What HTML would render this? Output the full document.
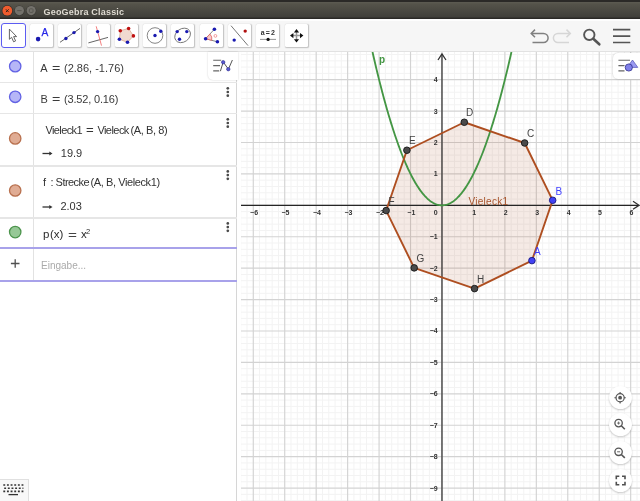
<!DOCTYPE html>
<html><head><meta charset="utf-8">
<style>
html,body{margin:0;padding:0;width:640px;height:501px;overflow:hidden;background:#fff;font-family:"Liberation Sans",sans-serif;}
body{filter:blur(0.35px);}
.abs{position:absolute;}
#title{left:0;top:0;width:640px;height:19px;background:linear-gradient(#2b2927 0,#2b2927 1.5px,#5b5950 2.5px,#55534a 4px,#403f3a 17px,#2a2926 18px,#2a2926 19px);}
#title .t{left:43.5px;top:6.5px;font-size:9px;font-weight:bold;color:#dfdbd2;letter-spacing:0.2px;}
#toolbar{left:0;top:19px;width:640px;height:33px;background:linear-gradient(#fdfdfd 0,#fdfdfd 1.5px,#f6f6f6 2.5px);border-bottom:1.2px solid #e2e2e2;box-sizing:border-box;}
.btn{position:absolute;top:5px;width:23px;height:23px;border-radius:1.5px;background:#fff;box-shadow:0.2px 0.4px 1.2px rgba(0,0,0,0.22);}
.btn.sel{box-shadow:none;border:1.7px solid #5c5cf2;border-radius:3px;box-sizing:border-box;width:24.6px;height:24.6px;top:4.1px;}
#alg{left:0;top:52px;width:236px;height:449px;background:#fff;border-right:1px solid #d6d6d6;}
.hl{position:absolute;left:0;width:237px;height:1.5px;background:#e6e6e6;}
.mk{position:absolute;left:8.8px;width:11px;height:11px;border-radius:50%;}
.tx{position:absolute;font-size:10.3px;color:#333;white-space:nowrap;}
.dots{position:absolute;left:226.5px;width:2px;}
.dots i{display:block;width:1.8px;height:1.8px;border-radius:50%;background:#666;margin-bottom:1.5px;}
#graph{left:241px;top:52px;width:399px;height:449px;overflow:hidden;}
.zb{position:absolute;width:23px;height:23px;border-radius:50%;background:#fff;box-shadow:0 1px 2px rgba(0,0,0,0.22);}
</style></head><body>
<div id="title" class="abs">
  <svg class="abs" style="left:0;top:0" width="44" height="19">
    <circle cx="7.3" cy="10.7" r="5.6" fill="#33302c"/>
    <circle cx="7.3" cy="10.7" r="4.9" fill="#f05c2e"/>
    <path d="M5.9 9.3L8.7 12.1M8.7 9.3L5.9 12.1" stroke="#3a2218" stroke-width="1"/>
    <circle cx="19.4" cy="10.6" r="5.2" fill="#3b3a36"/>
    <circle cx="19.4" cy="10.6" r="4.6" fill="#73716b"/>
    <path d="M17.2 10.6H21.6" stroke="#55534e" stroke-width="0.9"/>
    <circle cx="31.2" cy="10.6" r="5.2" fill="#3b3a36"/>
    <circle cx="31.2" cy="10.6" r="4.6" fill="#73716b"/>
    <rect x="29.4" y="8.8" width="3.6" height="3.6" rx="0.8" fill="none" stroke="#55534e" stroke-width="0.9"/>
  </svg>
  <div class="abs t">GeoGebra Classic</div>
</div>
<div id="toolbar" class="abs">
  <div class="btn sel" style="left:1.2px"></div>
  <div class="btn" style="left:30px"></div>
  <div class="btn" style="left:58px"></div>
  <div class="btn" style="left:86.5px"></div>
  <div class="btn" style="left:114.6px"></div>
  <div class="btn" style="left:143px"></div>
  <div class="btn" style="left:171px"></div>
  <div class="btn" style="left:199.8px"></div>
  <div class="btn" style="left:227.8px"></div>
  <div class="btn" style="left:256px"></div>
  <div class="btn" style="left:284.8px"></div>
  <svg class="abs" style="left:0;top:-19px" width="640" height="52">
    <!-- select -->
    <path d="M9.4 29.1V39.3L11.6 37.3L13.6 41.8L15.6 40.9L13.6 36.6H16.6Z" fill="#fff" stroke="#555" stroke-width="0.9" stroke-linejoin="round"/>
    <!-- point -->
    <circle cx="38.1" cy="39.1" r="2.3" fill="#1a1ab0"/>
    <text x="41.4" y="35.7" font-family="Liberation Sans" font-size="10.2" fill="#2525e8" stroke="#2525e8" stroke-width="0.25">A</text>
    <!-- line -->
    <path d="M60 42.3L80 28.4" stroke="#555" stroke-width="0.9"/>
    <circle cx="65.9" cy="38.5" r="1.7" fill="#1a1ab0"/>
    <circle cx="74" cy="32.6" r="1.7" fill="#1a1ab0"/>
    <!-- perpendicular -->
    <path d="M88.4 42.9L108 37.4" stroke="#666" stroke-width="1"/>
    <path d="M96.2 26.3L101.5 45.6" stroke="#f07070" stroke-width="0.9"/>
    <circle cx="97.6" cy="31.6" r="1.7" fill="#1a1ab0"/>
    <!-- polygon -->
    <polygon points="120.3,30.7 128.6,28.5 133.4,35.9 127.5,42.3 119.4,39.2" fill="#f0d9d0" stroke="#d8a890" stroke-width="0.8"/>
    <circle cx="120.3" cy="30.7" r="1.8" fill="#c01010"/>
    <circle cx="128.6" cy="28.5" r="1.8" fill="#c01010"/>
    <circle cx="133.4" cy="35.9" r="1.8" fill="#c01010"/>
    <circle cx="127.5" cy="42.3" r="1.8" fill="#1a1ab0"/>
    <circle cx="119.4" cy="39.2" r="1.8" fill="#1a1ab0"/>
    <!-- circle -->
    <circle cx="155" cy="35.5" r="7.8" fill="none" stroke="#777" stroke-width="0.9"/>
    <circle cx="155" cy="35.5" r="1.7" fill="#1a1ab0"/>
    <circle cx="160.8" cy="31.3" r="1.7" fill="#1a1ab0"/>
    <!-- conic -->
    <ellipse cx="182.6" cy="35.4" rx="8.4" ry="6.6" transform="rotate(-35 182.6 35.4)" fill="none" stroke="#777" stroke-width="0.9"/>
    <circle cx="177.2" cy="31.6" r="1.7" fill="#1a1ab0"/>
    <circle cx="186.8" cy="31.6" r="1.7" fill="#1a1ab0"/>
    <circle cx="179.5" cy="39.2" r="1.7" fill="#1a1ab0"/>
    <!-- angle -->
    <path d="M205.6 38.7L214.4 29.2M205.6 38.7L217.4 41.8" stroke="#666" stroke-width="0.8"/>
    <path d="M205.6 38.7L209.9 34.1A6.3 6.3 0 0 1 211.7 40.3Z" fill="#f8c8c8" stroke="#e06060" stroke-width="0.8"/>
    <circle cx="215.4" cy="35.9" r="1.4" fill="none" stroke="#f09090" stroke-width="0.9"/>
    <circle cx="205.6" cy="38.7" r="1.8" fill="#1a1ab0"/>
    <circle cx="214.4" cy="29.2" r="1.8" fill="#1a1ab0"/>
    <circle cx="217.4" cy="41.8" r="1.8" fill="#1a1ab0"/>
    <!-- reflect -->
    <path d="M231 25.7L248 45.6" stroke="#666" stroke-width="0.9"/>
    <circle cx="245.2" cy="31.1" r="1.7" fill="#b01010"/>
    <circle cx="234.2" cy="40.1" r="1.7" fill="#1a1ab0"/>
    <!-- slider -->
    <text x="260.8" y="35" font-family="Liberation Sans" font-size="7" font-weight="bold" fill="#333" textLength="14.2">a = 2</text>
    <path d="M260 39.4H276" stroke="#888" stroke-width="0.9"/>
    <circle cx="268.1" cy="39.4" r="1.6" fill="#111"/>
    <!-- move graphics -->
    <path d="M292 35.6H301M296.5 31V40.2" stroke="#999" stroke-width="1.5"/>
    <path d="M296.5 29L293.9 32.4H299.1ZM296.5 42.6L293.9 39.2H299.1ZM290 35.6L293.4 33V38.2ZM303.4 35.6L300 33V38.2Z" fill="#111"/>
    <!-- undo -->
    <path d="M532 33.4H543.5A4.6 4.6 0 0 1 543.5 42.6H532.5" fill="none" stroke="#808080" stroke-width="1.5"/>
    <path d="M535 29.6L531.2 33.4L535 37.2" fill="none" stroke="#808080" stroke-width="1.5"/>
    <!-- redo -->
    <path d="M569.5 33.4H558A4.6 4.6 0 0 0 558 42.6H569" fill="none" stroke="#d6d6d6" stroke-width="1.5"/>
    <path d="M566.5 29.6L570.3 33.4L566.5 37.2" fill="none" stroke="#d6d6d6" stroke-width="1.5"/>
    <!-- search -->
    <circle cx="589.3" cy="34.8" r="5.2" fill="none" stroke="#555" stroke-width="1.9"/>
    <path d="M593.3 38.8L599.3 44.3" stroke="#555" stroke-width="2.6" stroke-linecap="round"/>
    <!-- menu -->
    <path d="M613 29.6H630.3M613 36.1H630.3M613 42.5H630.3" stroke="#555" stroke-width="1.6"/>
  </svg>
</div>

<div id="alg" class="abs">
  <div class="abs" style="left:32.5px;top:0;width:1px;height:228px;background:#e2e2e2"></div>
  <div class="hl" style="top:29.8px"></div>
  <div class="hl" style="top:60.6px"></div>
  <div class="hl" style="top:113.3px"></div>
  <div class="hl" style="top:165.3px"></div>
  <div class="abs" style="left:0;top:195px;width:237px;height:2px;background:#a8a2ea"></div>
  <div class="abs" style="left:0;top:227.5px;width:237px;height:2px;background:#a8a2ea"></div>
  <svg class="abs" style="left:0;top:0" width="32" height="200"><circle cx="15.2" cy="14.2" r="5.7" fill="#b6b6f7" stroke="#6262e4" stroke-width="1.3"/><circle cx="15.2" cy="44.8" r="5.7" fill="#b6b6f7" stroke="#6262e4" stroke-width="1.3"/><circle cx="15.2" cy="86.4" r="5.7" fill="#e0ac94" stroke="#b8704e" stroke-width="1.3"/><circle cx="15.2" cy="138.5" r="5.7" fill="#e0ac94" stroke="#b8704e" stroke-width="1.3"/><circle cx="15.2" cy="180.1" r="5.7" fill="#96c896" stroke="#4c944c" stroke-width="1.3"/></svg>

  <div class="tx" style="left:40.3px;top:10px;font-size:11px;color:#3a3a3a">A</div>
  <div class="tx" style="left:52.1px;top:10px;font-size:11px;color:#3a3a3a;transform:scaleX(1.3);transform-origin:0 0">=</div>
  <div class="tx" style="left:64px;top:10px;font-size:11px;color:#3a3a3a">(2.86, -1.76)</div>
  <div class="tx" style="left:40.5px;top:40.8px;font-size:11px;color:#3a3a3a">B</div>
  <div class="tx" style="left:51.8px;top:40.8px;font-size:11px;color:#3a3a3a;transform:scaleX(1.3);transform-origin:0 0">=</div>
  <div class="tx" style="left:64px;top:40.8px;font-size:11px;color:#3a3a3a;letter-spacing:-0.17px">(3.52, 0.16)</div>
  <div class="tx" style="left:45.4px;top:72.4px;font-size:11px;letter-spacing:-0.6px">Vieleck1</div>
  <div class="tx" style="left:85.7px;top:72.4px;font-size:11px;transform:scaleX(1.2);transform-origin:0 0">=</div>
  <div class="tx" style="left:97.4px;top:72.4px;font-size:11px;letter-spacing:-0.55px">Vieleck</div>
  <div class="tx" style="left:130.5px;top:72.4px;font-size:11px;letter-spacing:-0.4px">(A, B, 8)</div>
  <div class="tx" style="left:60.8px;top:95px;font-size:11px">19.9</div>
  <div class="tx" style="left:43.1px;top:124.4px;font-size:11px">f</div>
  <div class="tx" style="left:50.6px;top:124.4px;font-size:11px">:</div>
  <div class="tx" style="left:55.6px;top:124.4px;font-size:11px;letter-spacing:-0.55px">Strecke</div>
  <div class="tx" style="left:90.5px;top:124.4px;font-size:11px;letter-spacing:-0.4px">(A, B, Vieleck1)</div>
  <div class="tx" style="left:60.4px;top:148px;font-size:11px">2.03</div>
  <svg class="abs" style="left:40px;top:150px" width="16" height="10"><path d="M2.5 5H11" stroke="#333" stroke-width="1.3"/><path d="M12.5 5L9.3 3V7Z" fill="#333"/></svg>
  <svg class="abs" style="left:40px;top:97px" width="16" height="10"><path d="M2.5 4.5H11" stroke="#333" stroke-width="1.3"/><path d="M12.5 4.5L9.3 2.5V6.5Z" fill="#333"/></svg>
  <div class="tx" style="left:43.1px;top:176.4px;font-size:11.5px;color:#2a2a2a">p</div>
  <div class="tx" style="left:49.9px;top:176.4px;font-size:11.5px;color:#2a2a2a">(x)</div>
  <div class="tx" style="left:68px;top:176.6px;font-size:11.5px;color:#444;transform:scaleX(1.33);transform-origin:0 0">=</div>
  <div class="tx" style="left:80.9px;top:176.4px;font-size:11.5px;color:#2a2a2a">x</div>
  <div class="tx" style="left:86.1px;top:175.4px;font-size:7.5px;color:#2a2a2a">2</div>
  <div class="tx" style="left:41px;top:208px;font-size:10px;color:#aaa">Eingabe...</div>
  <svg class="abs" style="left:9px;top:206px" width="12" height="12"><path d="M6.2 1.2V9.8M1.9 5.5H10.5" stroke="#505050" stroke-width="1.3"/></svg>

  <svg class="abs" style="left:0;top:0" width="237" height="240" fill="#4a4a4a"><circle cx="227.8" cy="36.3" r="1.35"/><circle cx="227.8" cy="40.0" r="1.35"/><circle cx="227.8" cy="43.7" r="1.35"/><circle cx="227.8" cy="67.3" r="1.35"/><circle cx="227.8" cy="71.0" r="1.35"/><circle cx="227.8" cy="74.7" r="1.35"/><circle cx="227.8" cy="119.4" r="1.35"/><circle cx="227.8" cy="123.1" r="1.35"/><circle cx="227.8" cy="126.8" r="1.35"/><circle cx="227.8" cy="171.4" r="1.35"/><circle cx="227.8" cy="175.1" r="1.35"/><circle cx="227.8" cy="178.8" r="1.35"/></svg>

  <!-- algebra style bar button -->
  <div class="abs" style="left:207.6px;top:0;width:30px;height:27.5px;background:#fff;border-radius:0 0 0 5px;box-shadow:0 0 2px rgba(0,0,0,0.2)"></div>
  <svg class="abs" style="left:207px;top:0" width="31" height="28">
    <path d="M6.2 8.2H14.2M6.2 13.6H13M6.2 18.9H12.2" stroke="#666" stroke-width="1.1"/>
    <path d="M13.4 19.2L16.2 10L21.4 17.2L25.4 8" fill="none" stroke="#555" stroke-width="1"/>
    <circle cx="16.2" cy="10.2" r="1.7" fill="#5a5ad0" stroke="#2a2a90" stroke-width="0.6"/>
    <circle cx="21.3" cy="17.2" r="1.7" fill="#5a5ad0" stroke="#2a2a90" stroke-width="0.6"/>
  </svg>

  <!-- keyboard -->
  <div class="abs" style="left:-1px;top:427.4px;width:29.5px;height:24px;background:#f8f8f8;border:1px solid #e0e0e0;box-sizing:border-box"></div>
  <svg class="abs" style="left:0;top:427px" width="30" height="24">
    <path d="M3.3 6H23.4M3.3 12.4H23.4" stroke="#333" stroke-width="1.6" stroke-dasharray="1.9 1.75"/><path d="M4.2 9.25H23.4" stroke="#333" stroke-width="1.6" stroke-dasharray="1.9 1.75"/>
    <path d="M8.5 15.6H18" stroke="#333" stroke-width="1.3"/>
  </svg>
</div>

<div id="graph" class="abs">
  <svg class="abs" style="left:-241px;top:-52px" width="640" height="501"><path d="M241 500.63H640M241 494.35H640M241 481.78H640M241 475.50H640M241 469.22H640M241 462.93H640M241 450.37H640M241 444.08H640M241 437.80H640M241 431.52H640M241 418.95H640M241 412.67H640M240.70 52V501M241 406.39H640M246.99 52V501M241 400.10H640M259.57 52V501M241 387.54H640M265.86 52V501M241 381.25H640M272.15 52V501M241 374.97H640M278.44 52V501M241 368.69H640M291.02 52V501M241 356.12H640M297.31 52V501M241 349.84H640M303.60 52V501M241 343.56H640M309.89 52V501M241 337.27H640M322.47 52V501M241 324.71H640M328.76 52V501M241 318.42H640M335.05 52V501M241 312.14H640M341.34 52V501M241 305.86H640M353.92 52V501M241 293.29H640M360.21 52V501M241 287.01H640M366.50 52V501M241 280.73H640M372.79 52V501M241 274.44H640M385.37 52V501M241 261.88H640M391.66 52V501M241 255.59H640M397.95 52V501M241 249.31H640M404.24 52V501M241 243.03H640M416.82 52V501M241 230.46H640M423.11 52V501M241 224.18H640M429.40 52V501M241 217.90H640M435.69 52V501M241 211.61H640M448.27 52V501M241 199.05H640M454.56 52V501M241 192.76H640M460.85 52V501M241 186.48H640M467.14 52V501M241 180.20H640M479.72 52V501M241 167.63H640M486.01 52V501M241 161.35H640M492.30 52V501M241 155.07H640M498.59 52V501M241 148.78H640M511.17 52V501M241 136.22H640M517.46 52V501M241 129.93H640M523.75 52V501M241 123.65H640M530.04 52V501M241 117.37H640M542.62 52V501M241 104.80H640M548.91 52V501M241 98.52H640M555.20 52V501M241 92.24H640M561.49 52V501M241 85.95H640M574.07 52V501M241 73.39H640M580.36 52V501M241 67.10H640M586.65 52V501M241 60.82H640M592.94 52V501M241 54.54H640M605.52 52V501M611.81 52V501M618.10 52V501M624.39 52V501M636.97 52V501" stroke="#f3f3f3" stroke-width="1" fill="none"/><path d="M241 488.07H640M241 456.65H640M241 425.24H640M253.28 52V501M241 393.82H640M284.73 52V501M241 362.40H640M316.18 52V501M241 330.99H640M347.63 52V501M241 299.58H640M379.08 52V501M241 268.16H640M410.53 52V501M241 236.75H640M441.98 52V501M241 205.33H640M473.43 52V501M241 173.92H640M504.88 52V501M241 142.50H640M536.33 52V501M241 111.09H640M567.78 52V501M241 79.67H640M599.23 52V501M630.68 52V501" stroke="#d3d3d3" stroke-width="1.15" fill="none"/><polygon points="531.93,260.62 552.68,200.30 524.66,142.99 464.28,122.26 406.90,150.25 386.15,210.56 414.17,267.88 474.55,288.61" fill="rgb(153,51,0)" fill-opacity="0.1" stroke="none"/><path d="M241 205.33H638M441.98 501V54" stroke="#262626" stroke-width="1.15" fill="none"/><path d="M633 201.33L639 205.33L633 209.33" stroke="#303030" stroke-width="1.3" fill="none"/><path d="M437.98 60L441.98 54L445.98 60" stroke="#303030" stroke-width="1.3" fill="none"/><g font-family="Liberation Sans" font-size="7" font-weight="bold" fill="#333"><text x="254.08" y="214.93" text-anchor="middle">−6</text><text x="285.53" y="214.93" text-anchor="middle">−5</text><text x="316.98" y="214.93" text-anchor="middle">−4</text><text x="348.43" y="214.93" text-anchor="middle">−3</text><text x="379.88" y="214.93" text-anchor="middle">−2</text><text x="411.33" y="214.93" text-anchor="middle">−1</text><text x="474.23" y="214.93" text-anchor="middle">1</text><text x="505.68" y="214.93" text-anchor="middle">2</text><text x="537.13" y="214.93" text-anchor="middle">3</text><text x="568.58" y="214.93" text-anchor="middle">4</text><text x="600.03" y="214.93" text-anchor="middle">5</text><text x="631.48" y="214.93" text-anchor="middle">6</text><text x="437.68" y="490.57" text-anchor="end">−9</text><text x="437.68" y="459.15" text-anchor="end">−8</text><text x="437.68" y="427.74" text-anchor="end">−7</text><text x="437.68" y="396.32" text-anchor="end">−6</text><text x="437.68" y="364.90" text-anchor="end">−5</text><text x="437.68" y="333.49" text-anchor="end">−4</text><text x="437.68" y="302.08" text-anchor="end">−3</text><text x="437.68" y="270.66" text-anchor="end">−2</text><text x="437.68" y="239.25" text-anchor="end">−1</text><text x="437.68" y="176.42" text-anchor="end">1</text><text x="437.68" y="145.00" text-anchor="end">2</text><text x="437.68" y="113.59" text-anchor="end">3</text><text x="437.68" y="82.17" text-anchor="end">4</text><text x="437.68" y="214.93" text-anchor="end">0</text></g><polyline points="372.50,52.00 373.19,55.05 373.89,58.07 374.58,61.06 375.28,64.02 375.97,66.95 376.67,69.85 377.36,72.71 378.06,75.55 378.75,78.36 379.45,81.13 380.14,83.88 380.84,86.59 381.53,89.27 382.23,91.93 382.92,94.55 383.62,97.14 384.31,99.70 385.01,102.23 385.70,104.73 386.40,107.20 387.09,109.64 387.78,112.04 388.48,114.42 389.17,116.77 389.87,119.08 390.56,121.37 391.26,123.62 391.95,125.84 392.65,128.04 393.34,130.20 394.04,132.33 394.73,134.43 395.43,136.50 396.12,138.54 396.82,140.55 397.51,142.53 398.21,144.47 398.90,146.39 399.60,148.28 400.29,150.13 400.99,151.96 401.68,153.75 402.38,155.51 403.07,157.25 403.77,158.95 404.46,160.62 405.16,162.26 405.85,163.87 406.54,165.45 407.24,167.00 407.93,168.52 408.63,170.00 409.32,171.46 410.02,172.89 410.71,174.28 411.41,175.65 412.10,176.98 412.80,178.28 413.49,179.56 414.19,180.80 414.88,182.01 415.58,183.19 416.27,184.34 416.97,185.46 417.66,186.55 418.36,187.61 419.05,188.63 419.75,189.63 420.44,190.59 421.14,191.53 421.83,192.43 422.53,193.31 423.22,194.15 423.91,194.96 424.61,195.75 425.30,196.50 426.00,197.22 426.69,197.91 427.39,198.57 428.08,199.20 428.78,199.79 429.47,200.36 430.17,200.90 430.86,201.40 431.56,201.88 432.25,202.32 432.95,202.74 433.64,203.12 434.34,203.47 435.03,203.80 435.73,204.09 436.42,204.35 437.12,204.58 437.81,204.78 438.51,204.95 439.20,205.08 439.90,205.19 440.59,205.27 441.29,205.31 441.98,205.33 442.67,205.31 443.37,205.27 444.06,205.19 444.76,205.08 445.45,204.95 446.15,204.78 446.84,204.58 447.54,204.35 448.23,204.09 448.93,203.80 449.62,203.47 450.32,203.12 451.01,202.74 451.71,202.32 452.40,201.88 453.10,201.40 453.79,200.90 454.49,200.36 455.18,199.79 455.88,199.20 456.57,198.57 457.27,197.91 457.96,197.22 458.66,196.50 459.35,195.75 460.05,194.96 460.74,194.15 461.43,193.31 462.13,192.43 462.82,191.53 463.52,190.59 464.21,189.63 464.91,188.63 465.60,187.61 466.30,186.55 466.99,185.46 467.69,184.34 468.38,183.19 469.08,182.01 469.77,180.80 470.47,179.56 471.16,178.28 471.86,176.98 472.55,175.65 473.25,174.28 473.94,172.89 474.64,171.46 475.33,170.00 476.03,168.52 476.72,167.00 477.42,165.45 478.11,163.87 478.80,162.26 479.50,160.62 480.19,158.95 480.89,157.25 481.58,155.51 482.28,153.75 482.97,151.96 483.67,150.13 484.36,148.28 485.06,146.39 485.75,144.47 486.45,142.53 487.14,140.55 487.84,138.54 488.53,136.50 489.23,134.43 489.92,132.33 490.62,130.20 491.31,128.04 492.01,125.84 492.70,123.62 493.40,121.37 494.09,119.08 494.79,116.77 495.48,114.42 496.18,112.04 496.87,109.64 497.56,107.20 498.26,104.73 498.95,102.23 499.65,99.70 500.34,97.14 501.04,94.55 501.73,91.93 502.43,89.27 503.12,86.59 503.82,83.88 504.51,81.13 505.21,78.36 505.90,75.55 506.60,72.71 507.29,69.85 507.99,66.95 508.68,64.02 509.38,61.06 510.07,58.07 510.77,55.05 511.46,52.00" fill="none" stroke="#449644" stroke-width="1.85" stroke-linejoin="round"/><text x="379" y="62.5" font-family="Liberation Sans" font-weight="bold" font-size="10" fill="#449644">p</text><polygon points="531.93,260.62 552.68,200.30 524.66,142.99 464.28,122.26 406.90,150.25 386.15,210.56 414.17,267.88 474.55,288.61" fill="none" stroke="#ae4e20" stroke-width="1.9" stroke-linejoin="round"/><text x="468.5" y="205" font-family="Liberation Sans" font-size="10" letter-spacing="0.28" fill="#a8542c">Vieleck1</text><circle cx="531.93" cy="260.62" r="3.3" fill="#4242f4" stroke="#1a1a80" stroke-width="0.9"/><text x="534" y="255" font-family="Liberation Sans" font-size="10" fill="#4040ff">A</text><circle cx="552.68" cy="200.30" r="3.3" fill="#4242f4" stroke="#1a1a80" stroke-width="0.9"/><text x="555.5" y="194.5" font-family="Liberation Sans" font-size="10" fill="#4040ff">B</text><circle cx="524.66" cy="142.99" r="3.3" fill="#4a4a4a" stroke="#151515" stroke-width="0.9"/><text x="527" y="137" font-family="Liberation Sans" font-size="10" fill="#444">C</text><circle cx="464.28" cy="122.26" r="3.3" fill="#4a4a4a" stroke="#151515" stroke-width="0.9"/><text x="466" y="115.5" font-family="Liberation Sans" font-size="10" fill="#444">D</text><circle cx="406.90" cy="150.25" r="3.3" fill="#4a4a4a" stroke="#151515" stroke-width="0.9"/><text x="409" y="143.8" font-family="Liberation Sans" font-size="10" fill="#444">E</text><circle cx="386.15" cy="210.56" r="3.3" fill="#4a4a4a" stroke="#151515" stroke-width="0.9"/><text x="388.5" y="204.7" font-family="Liberation Sans" font-size="10" fill="#444">F</text><circle cx="414.17" cy="267.88" r="3.3" fill="#4a4a4a" stroke="#151515" stroke-width="0.9"/><text x="416.5" y="261.9" font-family="Liberation Sans" font-size="10" fill="#444">G</text><circle cx="474.55" cy="288.61" r="3.3" fill="#4a4a4a" stroke="#151515" stroke-width="0.9"/><text x="477" y="282.8" font-family="Liberation Sans" font-size="10" fill="#444">H</text></svg>
  <!-- graphics style bar -->
  <div class="abs" style="left:371.8px;top:1.2px;width:40px;height:26px;background:#fff;border-radius:5px;box-shadow:0 0 2px rgba(0,0,0,0.25)"></div>
  <svg class="abs" style="left:371px;top:0" width="30" height="30">
    <path d="M6.4 8.2H18M6.4 13.6H12.5M6.4 18.9H12.5" stroke="#666" stroke-width="1.1"/>
    <path d="M20.5 8L25.8 15.4H15.2Z" fill="#9a9af2" stroke="#5050b0" stroke-width="0.7"/>
    <circle cx="16.8" cy="15.5" r="3.6" fill="#8080e8" stroke="#303090" stroke-width="0.8"/>
  </svg>
  <div class="zb" style="left:367.7px;top:334px"></div>
  <div class="zb" style="left:367.7px;top:361.2px"></div>
  <div class="zb" style="left:367.7px;top:388.5px"></div>
  <div class="zb" style="left:367.7px;top:416.7px"></div>
  <svg class="abs" style="left:360px;top:330px" width="39" height="119">
    <!-- home -->
    <circle cx="19.1" cy="15.7" r="4.1" fill="none" stroke="#555" stroke-width="1.2"/>
    <circle cx="19.1" cy="15.7" r="1.9" fill="#555"/>
    <path d="M19.1 10V11.8M19.1 19.6V21.4M13.4 15.7H15.2M23 15.7H24.8" stroke="#555" stroke-width="1.1"/>
    <!-- zoom in -->
    <circle cx="17.6" cy="41.1" r="3.7" fill="none" stroke="#555" stroke-width="1.3"/>
    <path d="M20.3 43.8L23.8 47.2" stroke="#555" stroke-width="1.6"/>
    <path d="M17.6 39.6V42.6M16.1 41.1H19.1" stroke="#555" stroke-width="0.8"/>
    <!-- zoom out -->
    <circle cx="17.6" cy="69.8" r="3.7" fill="none" stroke="#555" stroke-width="1.3"/>
    <path d="M20.3 72.5L23.8 75.9" stroke="#555" stroke-width="1.6"/>
    <path d="M16.1 69.8H19.1" stroke="#555" stroke-width="0.9"/>
    <!-- fullscreen -->
    <path d="M15.3 97.3V94.3H18.3M21 94.3H24V97.3M24 99.7V102.7H21M18.3 102.7H15.3V99.7" fill="none" stroke="#505050" stroke-width="1.6"/>
  </svg>
</div>
</body></html>
